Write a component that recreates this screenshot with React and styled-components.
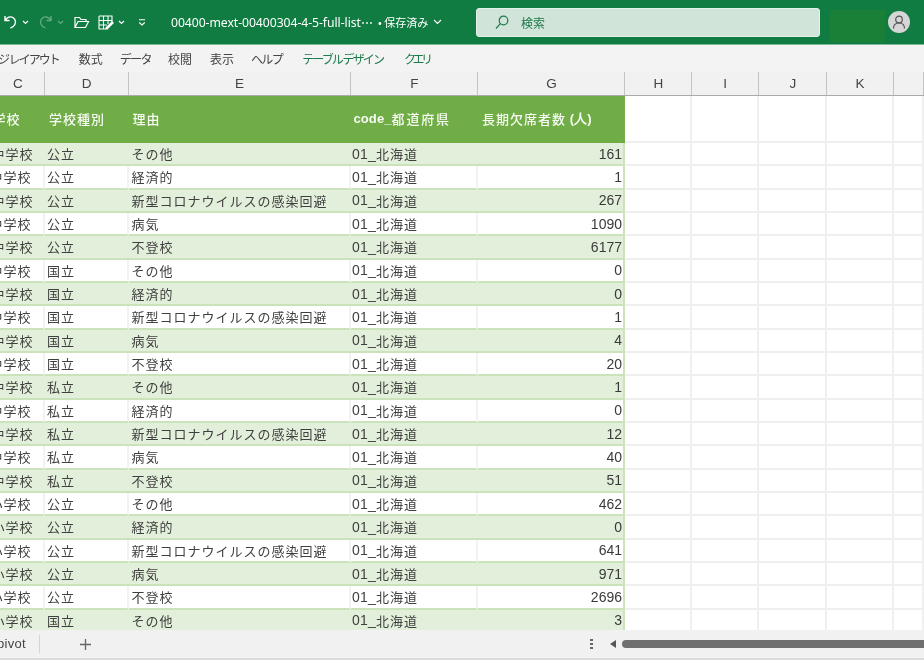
import React from "react";
import styled, { createGlobalStyle } from "styled-components";

const Global = createGlobalStyle`
  html, body { margin: 0; padding: 0; background: #fff; overflow: hidden; }
  #root { width: 924px; height: 660px; overflow: hidden; }
`;

const COLS = "44.5px 84px 222px 127.5px 147px 66.5px 67.5px 67.5px 67px 30.5px";
const SANS = `"Noto Sans CJK JP", "Noto Sans", sans-serif`;

const Window = styled.div`
  width: 924px;
  height: 660px;
  display: flex;
  flex-direction: column;
  overflow: hidden;
  filter: blur(0.35px);
  font-family: ${SANS};
`;

const TitleBar = styled.header`
  height: 45px;
  flex: none;
  background: #107c41;
  border-bottom: 1px solid #7fb99a;
  box-sizing: border-box;
  display: flex;
  align-items: center;
  color: #fff;
`;

const QuickAccess = styled.div`
  width: 171px;
  flex: none;
  height: 100%;
  display: flex;
  align-items: center;
  padding-left: 3px;
  box-sizing: border-box;
`;

const QuickIcon = styled.svg`
  flex: none;
  margin-left: ${(p) => p.$gap || 0}px;
  opacity: ${(p) => (p.$dim ? 0.35 : 1)};
`;

const FileName = styled.span`
  width: 207px;
  flex: none;
  font-family: "Noto Sans", sans-serif;
  font-size: 12.2px;
  white-space: nowrap;
  letter-spacing: -0.05px;
`;

const SavedState = styled.span`
  width: 98px;
  flex: none;
  font-size: 11px;
  display: flex;
  align-items: center;
  gap: 5px;
  white-space: nowrap;
`;

const SearchBox = styled.div`
  width: 344px;
  height: 29px;
  flex: none;
  background: #d0e4da;
  border-radius: 3px;
  border: 1px solid #e4f0ea;
  box-sizing: border-box;
  display: flex;
  align-items: center;
  padding-left: 18px;
  gap: 12px;
  color: #1f7a4a;
  font-size: 12px;
`;

const AccountBlock = styled.div`
  width: 55px;
  height: 32px;
  flex: none;
  margin-left: 10px;
  margin-top: 8px;
  background: #1a8037;
`;

const Avatar = styled.div`
  width: 22px;
  height: 22px;
  flex: none;
  margin-left: 3px;
  border-radius: 50%;
  background: #d6d6d6;
  display: flex;
  align-items: center;
  justify-content: center;
`;

const RibbonTabs = styled.nav`
  height: 27px;
  flex: none;
  background: #f3f3f3;
  display: flex;
  align-items: center;
  box-sizing: border-box;
`;

const Tab = styled.span`
  margin-left: ${(p) => p.$left}px;
  font-size: 12px;
  letter-spacing: ${(p) => p.$track || 0}px;
  color: ${(p) => (p.$accent ? "#1d7a4c" : "#444")};
  white-space: nowrap;
`;

const ColumnHeaders = styled.div`
  height: 24px;
  flex: none;
  background: #f1f1f1;
  border-bottom: 1px solid #a9a9a9;
  box-sizing: border-box;
  display: grid;
  grid-template-columns: ${COLS};
`;

const ColumnHeader = styled.div`
  border-right: 1px solid #c4c4c4;
  font-family: "Liberation Sans", sans-serif;
  font-size: 13.5px;
  color: #444;
  display: flex;
  align-items: center;
  justify-content: center;
  box-sizing: border-box;
  padding: 0 ${(p) => (p.$clipped ? 9 : 0)}px 0 1px;
`;

const Sheet = styled.main`
  flex: 1;
  min-height: 0;
  overflow: hidden;
  background: #fff;
`;

const Row = styled.div`
  display: grid;
  grid-template-columns: ${COLS};
  height: ${(p) => (p.$head ? "47px" : "23.33px")};
`;

const Cell = styled.div`
  box-sizing: border-box;
  display: flex;
  align-items: center;
  overflow: hidden;
  white-space: nowrap;
  font-size: 13px;
  letter-spacing: ${(p) => p.$track ?? 1}px;
  color: #3f3f3f;
  background: ${(p) => (p.$head ? "#70ad47" : p.$band ? "#e2efda" : "#fff")};
  border-bottom: 2px solid ${(p) => (p.$head ? "#70ad47" : "#cbe3ba")};
  border-right: ${(p) => (p.$band || p.$head ? "0" : "2px solid #f2f2f2")};
  padding-left: ${(p) => p.$pad ?? 1.5}px;
  ${(p) => p.$head && "color: #f6faf2; font-weight: 500;"}
`;

const ClippedCell = styled(Cell)`
  justify-content: flex-end;
  padding-left: 0;
  padding-right: ${(p) => (p.$head ? 24 : 11)}px;
  & > span { flex: none; }
`;

const NumberCell = styled(Cell)`
  justify-content: flex-end;
  padding-right: 1px;
  font-family: "Liberation Sans", sans-serif;
  font-size: 14px;
  letter-spacing: 0;
  color: #3a3a3a;
  border-right: 2px solid #cbe3ba;
`;

const HeadEnd = styled(Cell)`
  border-right: 2px solid #70ad47;
`;

const Latin = styled.span`
  font-family: "Liberation Sans", sans-serif;
  letter-spacing: ${(p) => (p.$head ? 0.1 : 0.2)}px;
  font-weight: ${(p) => (p.$head ? 700 : 400)};
  font-size: ${(p) => (p.$head ? 13 : 14)}px;
`;

const Blank = styled.div`
  box-sizing: border-box;
  border-right: 2px solid #efefef;
  border-bottom: 2px solid #efefef;
`;

const BottomBar = styled.footer`
  height: 30px;
  flex: none;
  background: #f1f1f1;
  border-bottom: 2px solid #dcdcdc;
  box-sizing: border-box;
  display: flex;
  align-items: center;
  color: #444;
`;

const SheetName = styled.span`
  width: 40px;
  flex: none;
  box-sizing: border-box;
  border-right: 1px solid #d4d4d4;
  font-size: 13px;
  font-family: "Liberation Sans", sans-serif;
  line-height: 18px;
  letter-spacing: 0.3px;
  overflow: hidden;
  display: flex;
  justify-content: flex-end;
  padding-right: 13px;
`;

const AddSheet = styled.span`
  margin-left: 40px;
  width: 11px;
  flex: none;
  display: flex;
`;

const SplitDots = styled.span`
  margin-left: 499px;
  width: 3px;
  flex: none;
  display: flex;
  flex-direction: column;
  gap: 2px;
  & > i { width: 3px; height: 2px; background: #666; display: block; }
`;

const ScrollLeft = styled.span`
  margin-left: 17px;
  width: 0;
  height: 0;
  flex: none;
  border-style: solid;
  border-width: 4px 6px 4px 0;
  border-color: transparent #555 transparent transparent;
`;

const ScrollThumb = styled.span`
  margin-left: 6px;
  flex: 1;
  height: 8px;
  background: #6f6f6f;
  border-radius: 4px 0 0 4px;
  margin-right: -6px;
`;

const Chevron = ({ gap = 4, dim }) => (
  <QuickIcon $gap={gap} $dim={dim} width="7" height="5" viewBox="0 0 7 5" fill="none" stroke="#fff" strokeWidth="1.2">
    <path d="M1 1l2.5 2.5L6 1" />
  </QuickIcon>
);

const columnLetters = ["C", "D", "E", "F", "G", "H", "I", "J", "K", ""];

const reasons = ["その他", "経済的", "新型コロナウイルスの感染回避", "病気", "不登校"];

const data = [
  ["中学校", "公立", 161], ["中学校", "公立", 1], ["中学校", "公立", 267], ["中学校", "公立", 1090], ["中学校", "公立", 6177],
  ["中学校", "国立", 0], ["中学校", "国立", 0], ["中学校", "国立", 1], ["中学校", "国立", 4], ["中学校", "国立", 20],
  ["中学校", "私立", 1], ["中学校", "私立", 0], ["中学校", "私立", 12], ["中学校", "私立", 40], ["中学校", "私立", 51],
  ["小学校", "公立", 462], ["小学校", "公立", 0], ["小学校", "公立", 641], ["小学校", "公立", 971], ["小学校", "公立", 2696],
  ["小学校", "国立", 3],
];

const blanks = [0, 1, 2, 3, 4].map((i) => <Blank key={i} />);

export default function App() {
  return (
    <>
      <Global />
      <Window>
        <TitleBar>
          <QuickAccess>
            <QuickIcon width="15" height="16" viewBox="0 0 15 16" fill="none" stroke="#fff" strokeWidth="1.4">
              <path d="M2 2v4.5h4.5M2.3 6.2C4 3.5 6.5 2.4 9 3.2c3 1 4.2 4.3 3 7-.8 1.8-2.5 3-4.5 3.8" />
            </QuickIcon>
            <Chevron gap={4} />
            <QuickIcon $gap={9} $dim width="15" height="16" viewBox="0 0 15 16" fill="none" stroke="#fff" strokeWidth="1.3">
              <path d="M13 2v4.5H8.500M12.700 6.200C11 3.500 8.500 2.400 6 3.200c-3 1-4.200 4.300-3 7 .8 1.800 2.500 3 4.500 3.800" />
            </QuickIcon>
            <Chevron gap={4} dim />
            <QuickIcon $gap={10} width="16" height="13" viewBox="0 0 16 13" fill="none" stroke="#fff" strokeWidth="1.2">
              <path d="M1 11.500V1.500h4.500l1.500 2h5v2M1 11.500h10.500l3-6H4z" />
            </QuickIcon>
            <QuickIcon $gap={8} width="16" height="15" viewBox="0 0 16 15" fill="none" stroke="#fff" strokeWidth="1.1">
              <path d="M1 1h13v7M1 1v13h7M1 5.500h13M1 10h8M5.500 1v13M10 1v8" />
              <path d="M8 14l7-7" strokeWidth="2.6" />
            </QuickIcon>
            <Chevron gap={4} />
            <QuickIcon $gap={13} width="8" height="7" viewBox="0 0 8 7" fill="none" stroke="#fff" strokeWidth="1.1">
              <path d="M1 .8h6M1.200 3.500L4 6l2.800-2.500" />
            </QuickIcon>
          </QuickAccess>
          <FileName>00400-mext-00400304-4-5-full-list⋯</FileName>
          <SavedState>
            • 保存済み
            <QuickIcon width="9" height="6" viewBox="0 0 9 6" fill="none" stroke="#fff" strokeWidth="1.2">
              <path d="M1 1l3.500 3.500L8 1" />
            </QuickIcon>
          </SavedState>
          <SearchBox>
            <svg width="14" height="15" viewBox="0 0 14 15" fill="none" stroke="#1f7a4a" strokeWidth="1.2">
              <circle cx="8.500" cy="5.500" r="4.300" />
              <path d="M5.300 8.700L1 13.500" />
            </svg>
            検索
          </SearchBox>
          <AccountBlock />
          <Avatar>
            <svg width="14" height="14" viewBox="0 0 14 14" fill="none" stroke="#555" strokeWidth="1.2">
              <circle cx="7" cy="4.500" r="3.300" />
              <path d="M1.500 13.500c0-3.500 2-5.500 5.500-5.500s5.500 2 5.500 5.500" />
            </svg>
          </Avatar>
        </TitleBar>

        <RibbonTabs>
          <Tab $left={-2} $track={-2}>ジ レイアウト</Tab>
          <Tab $left={20}>数式</Tab>
          <Tab $left={17} $track={-1.6}>データ</Tab>
          <Tab $left={17}>校閲</Tab>
          <Tab $left={18}>表示</Tab>
          <Tab $left={17} $track={-1.6}>ヘルプ</Tab>
          <Tab $left={20} $accent $track={-1.9}>テーブル&nbsp;デザイン</Tab>
          <Tab $left={21} $accent $track={-3.5}>クエリ</Tab>
        </RibbonTabs>

        <ColumnHeaders>
          {columnLetters.map((c, i) => (
            <ColumnHeader key={i} $clipped={i === 0}>{c}</ColumnHeader>
          ))}
        </ColumnHeaders>

        <Sheet>
          <Row $head>
            <ClippedCell $head><span>学校</span></ClippedCell>
            <Cell $head $pad={4.5}>学校種別</Cell>
            <Cell $head $pad={4}>理由</Cell>
            <Cell $head $pad={3} $track={1.8}><Latin $head>code_</Latin>都道府県</Cell>
            <HeadEnd $head $pad={4}>長期欠席者数<Latin $head>&nbsp;(人)</Latin></HeadEnd>
            {blanks}
          </Row>
          {data.map(([school, type, count], i) => {
            const band = i % 2 === 0;
            return (
              <Row key={i}>
                <ClippedCell $band={band}><span>{school}</span></ClippedCell>
                <Cell $band={band} $pad={2.5}>{type}</Cell>
                <Cell $band={band} $pad={3}>{reasons[i % 5]}</Cell>
                <Cell $band={band}><Latin>01_</Latin>北海道</Cell>
                <NumberCell $band={band}>{count}</NumberCell>
                {blanks}
              </Row>
            );
          })}
        </Sheet>

        <BottomBar>
          <SheetName>pivot</SheetName>
          <AddSheet>
            <svg width="11" height="11" viewBox="0 0 11 11" stroke="#666" strokeWidth="1.3">
              <path d="M5.500 0v11M0 5.500h11" />
            </svg>
          </AddSheet>
          <SplitDots><i /><i /><i /></SplitDots>
          <ScrollLeft />
          <ScrollThumb />
        </BottomBar>
      </Window>
    </>
  );
}
